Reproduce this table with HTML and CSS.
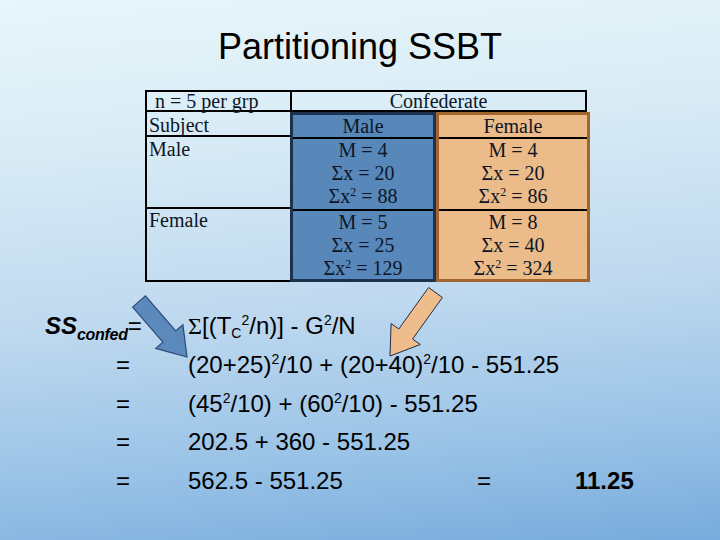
FILE: index.html
```html
<!DOCTYPE html>
<html lang="en">
<head>
    <meta charset="UTF-8">
    <meta name="viewport" content="width=device-width, initial-scale=1.0">
    <title>Partitioning SSBT</title>
    <link rel="stylesheet" href="styles.css">
</head>
<body>
    <div class="slide">
        <h1 class="title">Partitioning SSBT</h1>

        <div class="table">
            <div class="thead">
                <div class="th-left">n = 5 per grp</div>
                <div class="th-right">Confederate</div>
            </div>
            <div class="tbody">
                <div class="col col-subject">
                    <div class="cell cell-head">Subject</div>
                    <div class="cell cell-mid">Male</div>
                    <div class="cell cell-low">Female</div>
                </div>
                <div class="col col-male">
                    <div class="cell cell-head">Male</div>
                    <div class="cell cell-mid">M = 4<br>&Sigma;x = 20<br>&Sigma;x<sup>2</sup> = 88</div>
                    <div class="cell cell-low">M = 5<br>&Sigma;x = 25<br>&Sigma;x<sup>2</sup> = 129</div>
                </div>
                <div class="col col-female">
                    <div class="cell cell-head">Female</div>
                    <div class="cell cell-mid">M = 4<br>&Sigma;x = 20<br>&Sigma;x<sup>2</sup> = 86</div>
                    <div class="cell cell-low">M = 8<br>&Sigma;x = 40<br>&Sigma;x<sup>2</sup> = 324</div>
                </div>
            </div>
        </div>

        <div class="calc">
            <div class="line">
                <div class="lbl"><span class="ss">SS</span><sub class="confed">confed</sub>=</div>
                <div class="expr"><span class="sigma">&Sigma;</span>[(T<sub>C</sub><sup>2</sup>/n)] - G<sup>2</sup>/N</div>
            </div>
            <div class="line">
                <div class="lbl lbl-eq">=</div>
                <div class="expr">(20+25)<sup>2</sup>/10 + (20+40)<sup>2</sup>/10 - 551.25</div>
            </div>
            <div class="line">
                <div class="lbl lbl-eq">=</div>
                <div class="expr">(45<sup>2</sup>/10) + (60<sup>2</sup>/10) - 551.25</div>
            </div>
            <div class="line">
                <div class="lbl lbl-eq">=</div>
                <div class="expr">202.5 + 360 - 551.25</div>
            </div>
            <div class="line">
                <div class="lbl lbl-eq">=</div>
                <div class="expr expr-short">562.5 - 551.25</div>
                <div class="eq-final">=</div>
                <div class="result">11.25</div>
            </div>
        </div>

        <!-- pointer arrows from the columns to the formula -->
        <svg class="arrows" width="720" height="540" viewBox="0 0 720 540">
            <polygon class="arrow-blue" points="132.6,307.1 145.4,295.9 175.7,331 182.9,324.8 187,357 155.7,348.4 162.9,342.2"/>
            <polygon class="arrow-orange" points="428.6,287.5 442.4,297.5 412.6,339 420.3,344.5 390,356 391.1,323.5 398.8,329"/>
        </svg>
    </div>
</body>
</html>
```

FILE: styles.css
```css
body {
    margin: 0;
    padding: 0;
}
.slide {
    width: 720px;
    height: 540px;
    position: relative;
    overflow: hidden;
    font-family: 'Liberation Sans', Arial, sans-serif;
    color: #000;
    background: linear-gradient(175deg, #e8f5fa 0%, #d9ecf6 25%, #bfd9ef 55%, #9ac3e7 80%, #77abdc 100%);
}
.title {
    margin: 0;
    padding-top: 25px;
    font-size: 36px;
    font-weight: normal;
    line-height: 44px;
    text-align: center;
}

/* Table */
.table {
    margin: 21px 0 0 145px;
    font-family: 'Liberation Serif', 'Times New Roman', serif;
    font-size: 20px;
    color: #0d1626;
}
.table sup {
    font-size: 12px;
    vertical-align: 7px;
    line-height: 0;
}
.thead {
    display: flex;
    width: 442px;
    height: 22px;
    box-sizing: border-box;
    border: 2px solid #000;
    line-height: 18px;
}
.th-left {
    width: 143px;
    border-right: 2px solid #000;
    padding-left: 8px;
    box-sizing: border-box;
    width: 145px;
}
.th-right {
    flex: 1;
    text-align: center;
}
.tbody {
    display: flex;
    align-items: flex-start;
}
.col {
    box-sizing: border-box;
    height: 170px;
}
.col-subject {
    width: 145px;
    border-left: 2px solid #000;
    border-bottom: 2px solid #000;
}
.col-subject .cell {
    padding-left: 2px;
}
.col-subject .cell-head {
    height: 25px;
    line-height: 27px;
}
.col-subject .cell-mid {
    height: 72px;
    line-height: 22px;
    padding-top: 1px;
}
.col-male {
    width: 146px;
    border: 3px solid #1c324f;
    background-color: #5887ba;
    text-align: center;
}
.col-female {
    width: 154px;
    border: 3px solid #a2652b;
    background-color: #ebbb89;
    text-align: center;
}
.cell {
    box-sizing: border-box;
    line-height: 23px;
}
.cell-head {
    height: 24px;
    border-bottom: 2px solid #000;
    line-height: 22px;
}
.cell-mid {
    height: 72px;
    border-bottom: 2px solid #000;
}
.cell-low {
    height: 68px;
}

/* Calculation lines */
.calc {
    margin-top: 25px;
    padding-left: 45px;
    font-size: 24px;
}
.line {
    display: flex;
    height: 38.75px;
    line-height: 38.75px;
}
.calc sup {
    font-size: 14px;
    vertical-align: 9px;
    line-height: 0;
}
.calc sub {
    line-height: 0;
}
.lbl {
    width: 143px;
    flex-shrink: 0;
}
.lbl-eq {
    padding-left: 71px;
    box-sizing: border-box;
}
.ss {
    font-weight: bold;
    font-style: italic;
}
.confed {
    font-size: 16px;
    font-weight: bold;
    font-style: italic;
    vertical-align: -6px;
    letter-spacing: -0.3px;
}
.sigma {
    font-family: 'Liberation Serif', 'Times New Roman', serif;
}
.expr sub {
    font-size: 14px;
    vertical-align: -4px;
}
.expr-short {
    width: 289px;
}
.eq-final {
    width: 98px;
}
.result {
    font-weight: bold;
}

.arrows {
    position: absolute;
    top: 0;
    left: 0;
    pointer-events: none;
}
.arrow-blue {
    fill: #5b89bb;
    stroke: #2b4b78;
    stroke-width: 1.2;
}
.arrow-orange {
    fill: #efbd8b;
    stroke: #1f2a44;
    stroke-width: 1;
}
```
